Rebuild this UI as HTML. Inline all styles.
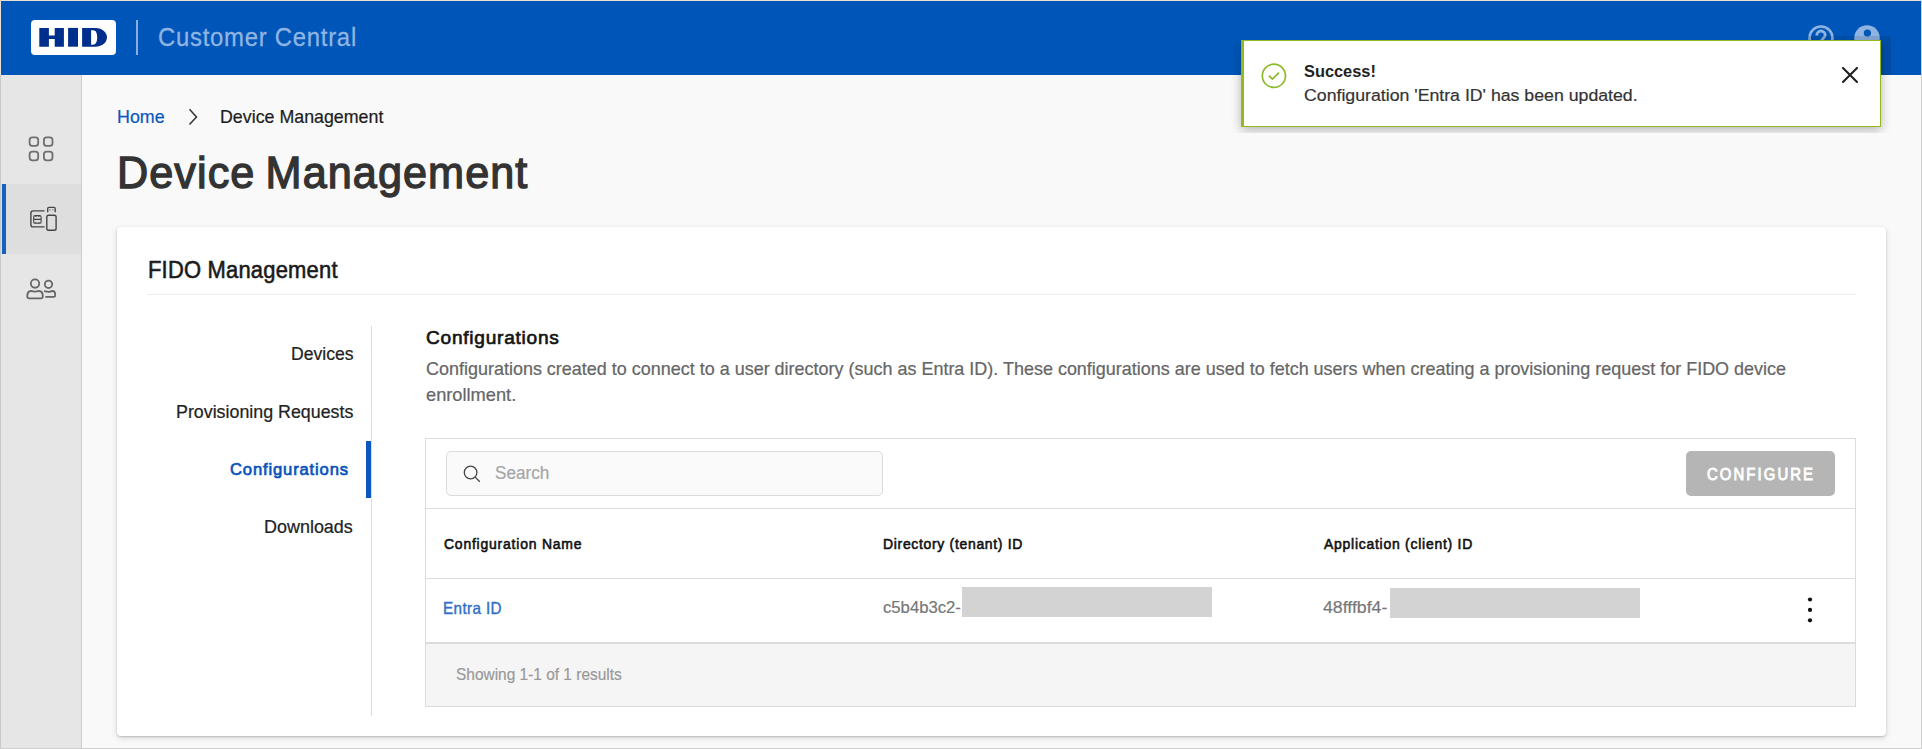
<!DOCTYPE html>
<html><head><meta charset="utf-8">
<style>
html,body{margin:0;padding:0;}
body{width:1922px;height:749px;overflow:hidden;position:relative;background:#f9f9f9;font-family:"Liberation Sans",sans-serif;}
.a{position:absolute;box-sizing:border-box;}
.t{position:absolute;white-space:nowrap;line-height:0;}
</style></head><body>
<!-- header -->
<div class="a" style="left:0;top:0;width:1922px;height:75px;background:#0056b8;"></div>
<div class="a" style="left:31px;top:20px;width:85px;height:35px;background:#fff;border-radius:4px;"></div>
<svg class="a" style="left:0;top:0" width="130" height="75" viewBox="0 0 130 75">
 <path fill="#002e8c" d="M39.3 27.9H48.9V35.4H54.7V27.9H63.9V46.7H54.7V39H48.9V46.7H39.3Z"/>
 <path fill="#002e8c" d="M68.1 27.9H78V46.7H68.1Z"/>
 <path fill="#002e8c" fill-rule="evenodd" d="M82.1 27.9H95.5C102.5 27.9 107 32.5 107 37.3C107 42.2 102.5 46.7 95.5 46.7H82.1Z M91.1 30.2H93C96 30.2 97.2 33 97.2 37.3C97.2 41.6 96 44.7 93 44.7H91.1Z"/>
</svg>
<div class="a" style="left:136px;top:20px;width:2px;height:35px;background:#86aee0;"></div>
<!-- header icons -->
<svg class="a" style="left:1790px;top:10px" width="110" height="60" viewBox="1790 10 110 60">
 <circle cx="1821" cy="38" r="11.5" fill="none" stroke="#8fb4e2" stroke-width="2.6"/>
 <path d="M1816.8 35.4C1816.8 32.8 1818.7 31 1821 31C1823.3 31 1825.2 32.8 1825.2 35C1825.2 38 1821 38.8 1821 42.5" fill="none" stroke="#8fb4e2" stroke-width="2.8"/>
 <circle cx="1867" cy="38" r="12.8" fill="#8fb4e2"/>
 <circle cx="1867.4" cy="33" r="3.6" fill="#0056b8"/>
 <path d="M1859 45.5C1861 42.5 1864 41.5 1867.4 41.5C1870.8 41.5 1873.8 42.5 1875.8 45.5" fill="none" stroke="#0056b8" stroke-width="3"/>
</svg>
<!-- borders of screenshot -->
<div class="a" style="left:0;top:0;width:1922px;height:1px;background:#e9e1d6;"></div>
<div class="a" style="left:0;top:0;width:1px;height:75px;background:#e9e1d6;"></div>
<div class="a" style="left:0;top:75px;width:1px;height:674px;background:#c9c9c9;"></div>
<div class="a" style="left:1921px;top:0;width:1px;height:749px;background:#cfcfcf;"></div>
<div class="a" style="left:0;top:748px;width:1922px;height:1px;background:#cfcfcf;"></div>
<!-- sidebar -->
<div class="a" style="left:1px;top:75px;width:80px;height:673px;background:#e6e6e6;"></div>
<div class="a" style="left:81px;top:75px;width:1px;height:673px;background:#cdcdcd;"></div>
<div class="a" style="left:1px;top:184px;width:80px;height:70px;background:#dedede;"></div>
<div class="a" style="left:2px;top:184px;width:4px;height:70px;background:#1461c2;"></div>
<svg class="a" style="left:0;top:75px" width="81" height="260" viewBox="0 75 81 260">
 <g fill="none" stroke="#6f6f6f" stroke-width="1.8">
  <rect x="29.6" y="137.3" width="8.6" height="8.6" rx="2.7"/>
  <rect x="43.9" y="137.3" width="8.6" height="8.6" rx="2.7"/>
  <rect x="29.6" y="151.7" width="8.6" height="8.6" rx="2.7"/>
  <rect x="43.9" y="151.7" width="8.6" height="8.6" rx="2.7"/>
 </g>
 <g fill="none" stroke="#454545" stroke-width="1.4">
  <path d="M44.6 210.9H33.1C31.9 210.9 30.9 211.9 30.9 213.1V224.7C30.9 225.9 31.9 226.9 33.1 226.9H44.6"/>
  <rect x="46.8" y="215.2" width="9.3" height="15" rx="1.8"/>
  <path d="M47.7 212.2V208.7C47.7 208 48.2 207.4 48.9 207.4H54C54.7 207.4 55.2 208 55.2 208.7V212.2"/>
 </g>
 <g fill="#454545">
  <rect x="49.4" y="209.5" width="1.3" height="0.8"/><rect x="52.2" y="209.5" width="1.3" height="0.8"/>
 </g>
 <g fill="none" stroke="#454545" stroke-width="1.1">
  <rect x="33.7" y="215.6" width="7.4" height="7.6" rx="1.3"/>
  <path d="M33.7 219.4H41.1M35.9 215.6V216.9M38.9 215.6V216.9M35.9 221.9V223.2M38.9 221.9V223.2"/>
 </g>
 <g fill="none" stroke="#666666" stroke-width="1.8">
  <circle cx="35.05" cy="283.55" r="4.2"/>
  <path d="M27.3 296.5C27.3 293 28.5 291 31 291C33 291 33.5 291.6 35 291.6C36.5 291.6 37 291 39 291C41.5 291 42.8 293 42.8 296.5C42.8 297.6 42 298.4 40.9 298.4H29.2C28.1 298.4 27.3 297.6 27.3 296.5Z"/>
  <circle cx="48.5" cy="284.3" r="3.7"/>
  <path d="M44 291.2C45 291.2 46.5 291.8 48.5 291.8C50.5 291.8 51.2 291 52.5 291C54.3 291 55.2 292.6 55.2 295V295.4C55.2 296.2 54.5 296.9 53.7 296.9H45.3"/>
 </g>
</svg>
<!-- breadcrumb chevron -->
<svg class="a" style="left:180px;top:100px" width="30" height="35" viewBox="180 100 30 35">
 <path d="M189.5 109.2L196.5 116.9L189.5 124.6" fill="none" stroke="#333" stroke-width="1.5"/>
</svg>
<!-- card -->
<div class="a" style="left:117px;top:227px;width:1769px;height:509px;background:#fff;border-radius:4px;box-shadow:0 1px 2px rgba(0,0,0,0.18),0 2px 6px rgba(0,0,0,0.13);"></div>
<div class="a" style="left:147px;top:294px;width:1709px;height:1px;background:#ececec;"></div>
<div class="a" style="left:371px;top:326px;width:1px;height:390px;background:#dcdcdc;"></div>
<div class="a" style="left:366px;top:441px;width:5px;height:57px;background:#0b57c0;"></div>
<!-- table -->
<div class="a" style="left:425px;top:438px;width:1431px;height:269px;border:1px solid #dcdcdc;background:#fff;"></div>
<div class="a" style="left:446px;top:451px;width:437px;height:45px;border:1px solid #dcdcdc;background:#fafafa;border-radius:5px;"></div>
<svg class="a" style="left:455px;top:455px" width="40" height="40" viewBox="455 455 40 40">
 <circle cx="470.6" cy="472.5" r="6.3" fill="none" stroke="#454545" stroke-width="1.3"/>
 <path d="M475.2 477.1L479.8 481.7" stroke="#454545" stroke-width="1.3"/>
</svg>
<div class="a" style="left:1686px;top:451px;width:149px;height:45px;background:#b5b5b5;border-radius:5px;"></div>
<div class="a" style="left:426px;top:508px;width:1429px;height:1px;background:#dcdcdc;"></div>
<div class="a" style="left:426px;top:578px;width:1429px;height:1px;background:#dcdcdc;"></div>
<div class="a" style="left:426px;top:644px;width:1429px;height:62px;background:#f5f5f5;"></div>
<div class="a" style="left:426px;top:642px;width:1429px;height:2px;background:#dcdcdc;"></div>
<div class="a" style="left:962px;top:587px;width:250px;height:30px;background:#d3d3d3;"></div>
<div class="a" style="left:1390px;top:588px;width:250px;height:30px;background:#d3d3d3;"></div>
<svg class="a" style="left:1800px;top:590px" width="20" height="40" viewBox="1800 590 20 40">
 <circle cx="1810" cy="599.5" r="2.1" fill="#111"/><circle cx="1810" cy="609.9" r="2.1" fill="#111"/><circle cx="1810" cy="620.3" r="2.1" fill="#111"/>
</svg>
<!-- toast -->
<div class="a" style="left:1808px;top:36px;width:83px;height:39px;background:rgba(0,0,0,0.1);"></div>
<div class="a" style="left:1231px;top:40px;width:660px;height:93px;overflow:hidden;">
 <div class="a" style="left:10px;top:0;width:640px;height:87px;background:#fff;border:1px solid #90ba1e;border-left:3px solid #90ba1e;box-shadow:0 3px 10px rgba(0,0,0,0.28);"></div>
</div>
<svg class="a" style="left:1255px;top:55px" width="40" height="40" viewBox="1255 55 40 40">
 <circle cx="1273.9" cy="75.8" r="11.6" fill="none" stroke="#8cb92a" stroke-width="1.7"/>
 <path d="M1268.9 75.6L1272.4 79.1L1279 72.6" fill="none" stroke="#8cb92a" stroke-width="1.7"/>
</svg>
<svg class="a" style="left:1835px;top:60px" width="30" height="30" viewBox="1835 60 30 30">
 <path d="M1843 67.9L1857 81.9M1857 67.9L1843 81.9" stroke="#1f1f1f" stroke-width="2.1" stroke-linecap="round"/>
</svg>
<div class="t" id="cc" style="left:157.53px;top:37.01px;font-size:25.71px;font-weight:normal;color:#8fb4e2;letter-spacing:0.780px;word-spacing:0.00px;-webkit-text-stroke:0.31px #8fb4e2;transform:scaleX(0.9300);transform-origin:0 0;">Customer Central</div>
<div class="t" id="home" style="left:117.27px;top:116.90px;font-size:18.14px;font-weight:normal;color:#0a58bd;letter-spacing:0.000px;word-spacing:0.00px;-webkit-text-stroke:0.22px #0a58bd;transform:scaleX(0.9851);transform-origin:0 0;">Home</div>
<div class="t" id="bc" style="left:220.02px;top:116.90px;font-size:18.14px;font-weight:normal;color:#1e1e1e;letter-spacing:0.000px;word-spacing:0.00px;-webkit-text-stroke:0.22px #1e1e1e;transform:scaleX(0.9826);transform-origin:0 0;">Device Management</div>
<div class="t" id="title" style="left:117.43px;top:172.60px;font-size:44.55px;font-weight:normal;color:#333333;letter-spacing:1.094px;word-spacing:-3.00px;-webkit-text-stroke:1.34px #333333;transform:scaleX(0.9700);transform-origin:0 0;">Device Management</div>
<div class="t" id="fido" style="left:147.60px;top:269.91px;font-size:23.88px;font-weight:normal;color:#1a1a1a;letter-spacing:0.214px;word-spacing:0.00px;-webkit-text-stroke:0.57px #1a1a1a;transform:scaleX(0.9200);transform-origin:0 0;">FIDO Management</div>
<div class="t" id="nav1" style="left:291.02px;top:353.61px;font-size:18.00px;font-weight:normal;color:#222222;letter-spacing:0.000px;word-spacing:0.00px;-webkit-text-stroke:0.22px #222222;transform:scaleX(0.9773);transform-origin:0 0;">Devices</div>
<div class="t" id="nav2" style="left:176.12px;top:411.90px;font-size:18.00px;font-weight:normal;color:#222222;letter-spacing:0.000px;word-spacing:0.00px;-webkit-text-stroke:0.22px #222222;transform:scaleX(0.9902);transform-origin:0 0;">Provisioning Requests</div>
<div class="t" id="nav3" style="left:230.00px;top:468.81px;font-size:17.30px;font-weight:normal;color:#0a53ba;letter-spacing:0.885px;word-spacing:0.00px;-webkit-text-stroke:0.69px #0a53ba;transform:scaleX(0.9600);transform-origin:0 0;">Configurations</div>
<div class="t" id="nav4" style="left:264.47px;top:526.71px;font-size:18.00px;font-weight:normal;color:#222222;letter-spacing:0.000px;word-spacing:0.00px;-webkit-text-stroke:0.22px #222222;transform:scaleX(0.9974);transform-origin:0 0;">Downloads</div>
<div class="t" id="h2" style="left:426.09px;top:338.31px;font-size:19.10px;font-weight:normal;color:#141414;letter-spacing:0.738px;word-spacing:0.00px;-webkit-text-stroke:0.67px #141414;">Configurations</div>
<div class="t" id="d1" style="left:425.50px;top:369.01px;font-size:18.14px;font-weight:normal;color:#666666;letter-spacing:0.000px;word-spacing:0.00px;-webkit-text-stroke:0.22px #666666;transform:scaleX(0.9914);transform-origin:0 0;">Configurations created to connect to a user directory (such as Entra ID). These configurations are used to fetch users when creating a provisioning request for FIDO device</div>
<div class="t" id="d2" style="left:425.50px;top:394.82px;font-size:18.14px;font-weight:normal;color:#666666;letter-spacing:0.000px;word-spacing:0.00px;-webkit-text-stroke:0.22px #666666;transform:scaleX(1.0066);transform-origin:0 0;">enrollment.</div>
<div class="t" id="search" style="left:494.91px;top:472.60px;font-size:18.29px;font-weight:normal;color:#a6a6a6;letter-spacing:0.000px;word-spacing:0.00px;-webkit-text-stroke:0.22px #a6a6a6;transform:scaleX(0.9365);transform-origin:0 0;">Search</div>
<div class="t" id="btn" style="left:1707.20px;top:474.01px;font-size:17.34px;font-weight:normal;color:#ffffff;letter-spacing:2.412px;word-spacing:0.00px;-webkit-text-stroke:0.87px #ffffff;transform:scaleX(0.8600);transform-origin:0 0;">CONFIGURE</div>
<div class="t" id="th1" style="left:443.70px;top:543.71px;font-size:14.70px;font-weight:normal;color:#111111;letter-spacing:0.829px;word-spacing:0.00px;-webkit-text-stroke:0.59px #111111;transform:scaleX(0.9500);transform-origin:0 0;">Configuration Name</div>
<div class="t" id="th2" style="left:882.91px;top:544.10px;font-size:14.70px;font-weight:normal;color:#111111;letter-spacing:0.725px;word-spacing:0.00px;-webkit-text-stroke:0.59px #111111;transform:scaleX(0.9500);transform-origin:0 0;">Directory (tenant) ID</div>
<div class="t" id="th3" style="left:1323.90px;top:544.00px;font-size:14.70px;font-weight:normal;color:#111111;letter-spacing:0.786px;word-spacing:0.00px;-webkit-text-stroke:0.59px #111111;transform:scaleX(0.9500);transform-origin:0 0;">Application (client) ID</div>
<div class="t" id="entra" style="left:442.73px;top:608.81px;font-size:15.87px;font-weight:normal;color:#2e6fc4;letter-spacing:0.400px;word-spacing:0.00px;-webkit-text-stroke:0.38px #2e6fc4;transform:scaleX(0.9600);transform-origin:0 0;">Entra ID</div>
<div class="t" id="id1" style="left:883.30px;top:607.61px;font-size:15.71px;font-weight:normal;color:#777777;letter-spacing:0.000px;word-spacing:0.00px;-webkit-text-stroke:0.19px #777777;transform:scaleX(1.0623);transform-origin:0 0;">c5b4b3c2-</div>
<div class="t" id="id2" style="left:1323.27px;top:607.82px;font-size:15.71px;font-weight:normal;color:#777777;letter-spacing:0.000px;word-spacing:0.00px;-webkit-text-stroke:0.19px #777777;transform:scaleX(1.1271);transform-origin:0 0;">48fffbf4-</div>
<div class="t" id="foot" style="left:456.33px;top:674.91px;font-size:15.86px;font-weight:normal;color:#999999;letter-spacing:0.000px;word-spacing:0.00px;-webkit-text-stroke:0.19px #999999;transform:scaleX(0.9741);transform-origin:0 0;">Showing 1-1 of 1 results</div>
<div class="t" id="succ" style="left:1304.44px;top:72.40px;font-size:16.86px;font-weight:bold;color:#222222;letter-spacing:0.000px;word-spacing:0.00px;transform:scaleX(0.9706);transform-origin:0 0;">Success!</div>
<div class="t" id="msg" style="left:1304.39px;top:95.51px;font-size:16.71px;font-weight:normal;color:#333333;letter-spacing:0.000px;word-spacing:0.00px;-webkit-text-stroke:0.20px #333333;transform:scaleX(1.0612);transform-origin:0 0;">Configuration &#39;Entra ID&#39; has been updated.</div>
</body></html>
